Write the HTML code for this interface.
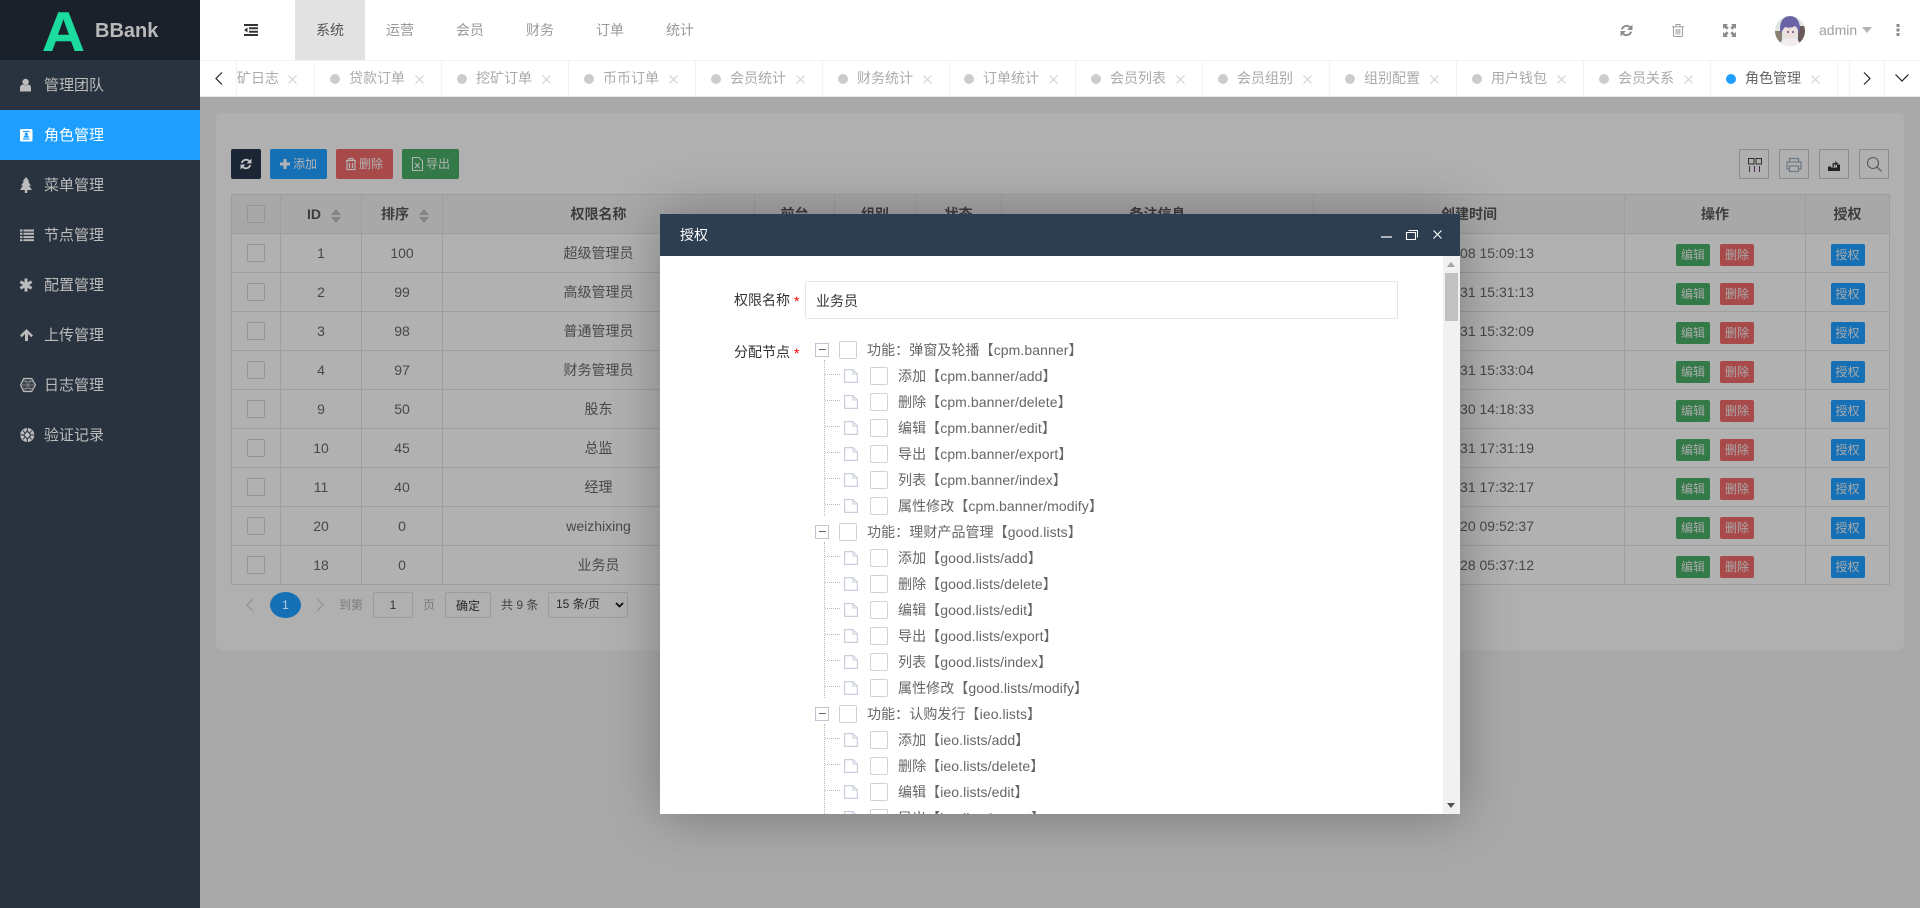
<!DOCTYPE html>
<html lang="zh"><head><meta charset="utf-8"><title>角色管理</title>
<style>
*{box-sizing:border-box}
html,body{margin:0;padding:0;width:1920px;height:908px;overflow:hidden;background:#a9a9a9;font-family:"Liberation Sans","Noto Sans CJK SC",sans-serif;font-size:14px;color:#666}
.a{position:absolute}
svg{display:block;overflow:visible}
#side{left:0;top:0;width:200px;height:908px;background:#29333f}
#brand{left:0;top:0;width:200px;height:60px;background:#1a212b;overflow:hidden}
.m{position:absolute;left:0;width:200px;height:50px;line-height:52px;padding-left:44px;font-size:15px;color:#bcbcbc}
.m.on{background:#1e9fff;color:#fff}
.m svg{position:absolute;left:20px;top:17px;width:16px;height:16px}
#top{left:200px;top:0;width:1720px;height:60px;background:#fff}
.n{position:absolute;top:0;height:60px;line-height:60px;width:70px;text-align:center;color:#999;font-size:14px}
#tabs{left:200px;top:60px;width:1720px;height:37px;background:#fff;border-top:1px solid #f2f2f2;border-bottom:1px solid #e6e6e6;overflow:hidden}
#strip{left:36px;top:0;width:1613px;height:36px;overflow:hidden;border-left:1px solid #f2f2f2}
.t{position:absolute;top:0;width:127px;height:36px;border-right:1px solid #f2f2f2;line-height:35px;color:#aaa;font-size:14px;padding-left:34px;white-space:nowrap}
.t b{position:absolute;left:15px;top:13px;width:10px;height:10px;border-radius:50%;background:#ccc}
.t svg{position:absolute;left:100px;top:14px;width:9px;height:9px}
.t.on{color:#666}.t.on b{background:#1e9fff}
#card{left:216px;top:113px;width:1688px;height:537px;background:#b0b0b0;border-radius:6px}
.b{position:absolute;top:149px;height:30px;border-radius:2px;color:#b4b4b4;font-size:12px;line-height:30px}
.ti{position:absolute;top:149px;width:30px;height:30px;border:1px solid #8d8d8d}
table{position:absolute;left:231px;top:194px;width:1658px;border-collapse:collapse;table-layout:fixed;font-size:14px;color:#484848}
td,th{border:1px solid #9e9e9e;text-align:center;padding:0;height:39px;font-weight:normal}
th{background:#a8a8a8;font-weight:bold;color:#3d3d3d;position:relative}
td{background:#b1b1b1}
.cb{display:block;margin:0 auto;width:18px;height:18px;border:1px solid #959595;border-radius:2px}
.up,.dn{position:absolute;width:0;height:0;border-left:5px solid transparent;border-right:5px solid transparent}
.up{border-bottom:6px solid #838383}.dn{border-top:6px solid #838383}
.x{display:inline-block;width:34px;height:22px;line-height:22px;border-radius:2px;font-size:12px;color:#aaa;position:relative;top:2px}
.gr{background:#337a48}.re{background:#a84a4a;margin-left:10px}.bl{background:#1670b5}
.p{position:absolute;font-size:12px;line-height:26px;top:592px;color:#7b7b7b}
#lay{left:660px;top:214px;width:800px;height:600px;box-shadow:1px 1px 50px rgba(0,0,0,.3);background:#fff}
#ttl{left:0;top:0;width:800px;height:42px;background:#2c3e50;color:#fff;line-height:42px;padding-left:20px;font-size:14px}
#body{left:0;top:42px;width:783px;height:558px;background:#fff;overflow:hidden}
#sb{left:783px;top:42px;width:17px;height:558px;background:#f1f1f1}
.l{position:absolute;left:74px;width:60px;color:#333;font-size:14px;line-height:20px;white-space:nowrap}
.l i{position:absolute;left:60px;top:1px;color:#f00;font-style:normal}
#ipt{left:145px;top:25px;width:593px;height:38px;border:1px solid #e6e6e6;border-radius:2px;line-height:38px;padding-left:10px;color:#333}
#tree{left:0;top:81px;width:783px}
.r{position:relative;height:26px;line-height:26px;white-space:nowrap;color:#666;font-size:14px}
.r span{letter-spacing:.08px}
.r u{position:absolute;width:18px;height:18px;border:1px solid #d2d2d2;border-radius:2px;top:4px;background:#fff}
.g u{left:179px}.g span{position:absolute;left:207px;top:0}
.g s{position:absolute;left:155px;top:6px;width:14px;height:14px;border:1px solid #bcc5d0;background:#fff}
.g s:after{content:"";position:absolute;left:3px;top:5px;width:7px;height:1px;background:#666}
.c u{left:210px}.c span{position:absolute;left:238px;top:0}
.c svg{position:absolute;left:184px;top:6px;width:14px;height:14px}
.c:before{content:"";position:absolute;left:165px;top:11px;width:15px;border-top:1px dotted #bbb}
.k{position:relative}
.k:before{content:"";position:absolute;left:164px;top:-3px;bottom:3px;border-left:1px dotted #bbb}
</style></head><body>
<svg width="0" height="0" style="position:absolute"><defs>
<symbol id="xx" viewBox="0 0 9 9"><path d="M.5.5l8 8M8.5.5l-8 8" stroke="#cfcfcf" stroke-width="1" fill="none"/></symbol>
<symbol id="f" viewBox="0 0 14 14"><path d="M.6.6H9L13.400 5V13.400H.6Z" fill="#fff" stroke="#c9cedb" stroke-width="1.200"/><path d="M9 .6V5H13.400" fill="none" stroke="#c9cedb" stroke-width="1.100"/></symbol>
<symbol id="rf" viewBox="0 0 24 24"><g fill="none" stroke="currentColor" stroke-width="3.6"><path d="M3.5 10A9 9 0 0 1 18.5 6"/><path d="M20.5 14A9 9 0 0 1 5.500 18"/></g><path d="M23 1V11H13ZM1 23V13H11Z" fill="currentColor"/></symbol>
</defs></svg>

<div class="a" id="side">
<div class="a" id="brand">
<div class="a" style="left:42px;top:0;width:40px;font:bold 56px/64px 'Liberation Sans',sans-serif;color:#1bdc9e;transform:scaleX(1.06);transform-origin:left top;-webkit-text-stroke:.4px #1bdc9e">A</div>
<div class="a" style="left:95px;top:19px;font:bold 20px/24px 'Liberation Sans',sans-serif;color:#b9b9b9">BBank</div>
</div>
<div class="m" style="top:60px"><svg viewBox="0 0 16 16"><circle cx="5.600" cy="5" r="3.200" fill="#bcbcbc"/><path d="M0 14.500V11C0 9 1.200 7.800 2.800 7.500 4.200 8.700 7 8.700 8.400 7.500 10 7.800 11 9 11 11V14.500Z" fill="#bcbcbc"/></svg>管理团队</div>
<div class="m on" style="top:110px"><svg viewBox="0 0 16 16"><rect x="0" y="2" width="12.500" height="12.500" rx="1.500" fill="#fff"/><path d="M3 4.500h6.500M3 12h6.500" stroke="#1e9fff" stroke-width="1.300"/><circle cx="6.300" cy="7.300" r="1.600" fill="#1e9fff"/><rect x="3.800" y="8.800" width="5" height="1.800" fill="#1e9fff"/></svg>角色管理</div>
<div class="m" style="top:160px"><svg viewBox="0 0 16 16"><path d="M6 0L9.500 4.500H8L11 8.500H9L12 13H7.300V16H4.800V13H0L3 8.500H1L4 4.500H2.500Z" fill="#bcbcbc"/></svg>菜单管理</div>
<div class="m" style="top:210px"><svg viewBox="0 0 16 16"><path d="M0 2.500h2.500v2H0zM3.500 2.500H14v2H3.500zM0 5.800h2.500v2H0zM3.500 5.800H14v2H3.500zM0 9.100h2.500v2H0zM3.500 9.100H14v2H3.500zM0 12.300h2.500v1.800H0zM3.500 12.300H14v1.800H3.500z" fill="#bcbcbc"/></svg>节点管理</div>
<div class="m" style="top:260px"><svg viewBox="0 0 16 16"><path d="M6 1.500v13M.4 4.700l11.200 6.600M11.600 4.700L.4 11.300" stroke="#bcbcbc" stroke-width="3" fill="none"/></svg>配置管理</div>
<div class="m" style="top:310px"><svg viewBox="0 0 16 16"><path d="M6.500 2L13 8.500 11.300 10.200 8 7V14H5V7L1.700 10.200 0 8.500Z" fill="#bcbcbc"/></svg>上传管理</div>
<div class="m" style="top:360px"><svg viewBox="0 0 16 16"><path d="M3.700 1.500H11.700L15.500 8 11.700 14.500H3.700L0.500 8Z" fill="#3a434e" stroke="#bcbcbc" stroke-width="1.200"/><path d="M4 1.500L8 8 4 14.500M11.500 1.500L8 8 11.500 14.500M.5 8H15.500M2.500 4.500H13.500M2.500 11.500H13.500" fill="none" stroke="#8c8c8c" stroke-width=".7"/></svg>日志管理</div>
<div class="m" style="top:410px"><svg viewBox="0 0 16 16"><circle cx="7.300" cy="8" r="7" fill="#bcbcbc"/><path d="M7.300 4L11 8 7.300 12 3.600 8Z" fill="#bcbcbc" stroke="#29333f"/><path d="M7.300 1V4M7.300 12V15M.3 8H3.600M11 8H14.300M3 3.500L5 6M11.600 3.500L9.600 6M3 12.500L5 10M11.600 12.500L9.600 10" stroke="#29333f" stroke-width="1"/></svg>验证记录</div>
</div>

<div class="a" id="top">
<svg class="a" style="left:44px;top:24px;width:14px;height:12px" viewBox="0 0 14 12"><path d="M0 0h14v2H0zM5 3.300h9v2H5zM5 6.700h9v2H5zM0 10h14v2H0zM3.500 3.500v5L0 6z" fill="#333"/></svg>
<div class="n" style="left:95px;background:#e2e2e2;color:#555">系统</div>
<div class="n" style="left:165px">运营</div>
<div class="n" style="left:235px">会员</div>
<div class="n" style="left:305px">财务</div>
<div class="n" style="left:375px">订单</div>
<div class="n" style="left:445px">统计</div>
<svg class="a" style="left:1420px;top:24px;width:13px;height:13px;color:#8c8c8c"><use href="#rf"/></svg>
<svg class="a" style="left:1472px;top:24px;width:12px;height:13px" viewBox="0 0 12 13"><path d="M1.500 3V11.500Q1.500 12.500 2.500 12.500H9.500Q10.500 12.500 10.500 11.500V3M0 2.700H12M4 2.500V.5H8V2.500M4.200 5V10.500M6 5V10.500M7.800 5V10.500" fill="none" stroke="#a0a0a0"/></svg>
<svg class="a" style="left:1523px;top:24px;width:13px;height:13px" viewBox="0 0 13 13"><path d="M0 0H5L3.500 1.500 5.700 3.700 3.700 5.700 1.500 3.500 0 5ZM13 0V5L11.500 3.500 9.300 5.700 7.300 3.700 9.500 1.500 8 0ZM0 13V8L1.500 9.500 3.700 7.300 5.700 9.300 3.500 11.500 5 13ZM13 13H8L9.500 11.500 7.300 9.300 9.300 7.300 11.500 9.500 13 8Z" fill="#8c8c8c"/></svg>
<svg class="a" style="left:1575px;top:16px;width:30px;height:30px" viewBox="0 0 30 30"><defs><clipPath id="av"><circle cx="15" cy="15" r="15"/></clipPath></defs><g clip-path="url(#av)"><rect width="30" height="30" fill="#dfe6e0"/><rect x="0" y="15" width="7" height="15" fill="#8b8074"/><rect x="23" y="10" width="7" height="20" fill="#6a5a5c"/><path d="M5 30c0-6 4-8 10-8s10 2 10 8z" fill="#f0ecf0"/><ellipse cx="15" cy="15" rx="7" ry="8" fill="#efdcdc"/><path d="M6 18C3 7 8 0 15 0s12 7 9 18c-1-3-1-6-4-8-3 2-7 2-10 1-2 2-3 4-4 7z" fill="#6a64a6"/><circle cx="18" cy="16" r="1" fill="#544a80"/><circle cx="13" cy="16" r="1" fill="#544a80"/></g></svg>
<div class="a" style="left:1619px;top:0;line-height:60px;color:#a0a0a0;font-size:14px">admin</div>
<div class="a" style="left:1662px;top:27px;width:0;height:0;border-left:5.500px solid transparent;border-right:5.500px solid transparent;border-top:6px solid #b4b4b4"></div>
<svg class="a" style="left:1696px;top:24px;width:4px;height:12px" viewBox="0 0 4 12"><path d="M.5 0h3v3h-3zM.5 4.500h3v3h-3zM.5 9h3v3h-3z" fill="#888"/></svg>
</div>

<div class="a" id="tabs">
<svg class="a" style="left:15px;top:11px;width:8px;height:13px" viewBox="0 0 8 13"><path d="M7 .5L1 6.500 7 12.500" fill="none" stroke="#222" stroke-width="1.200"/></svg>
<div class="a" id="strip">
<div class="t" style="left:-49px;padding-left:35px"><b></b>挖矿日志<svg><use href="#xx"/></svg></div>
<div class="t" style="left:78px"><b></b>贷款订单<svg><use href="#xx"/></svg></div>
<div class="t" style="left:205px"><b></b>挖矿订单<svg><use href="#xx"/></svg></div>
<div class="t" style="left:332px"><b></b>币币订单<svg><use href="#xx"/></svg></div>
<div class="t" style="left:459px"><b></b>会员统计<svg><use href="#xx"/></svg></div>
<div class="t" style="left:586px"><b></b>财务统计<svg><use href="#xx"/></svg></div>
<div class="t" style="left:712px"><b></b>订单统计<svg><use href="#xx"/></svg></div>
<div class="t" style="left:839px"><b></b>会员列表<svg><use href="#xx"/></svg></div>
<div class="t" style="left:966px"><b></b>会员组别<svg><use href="#xx"/></svg></div>
<div class="t" style="left:1093px"><b></b>组别配置<svg><use href="#xx"/></svg></div>
<div class="t" style="left:1220px"><b></b>用户钱包<svg><use href="#xx"/></svg></div>
<div class="t" style="left:1347px"><b></b>会员关系<svg><use href="#xx"/></svg></div>
<div class="t on" style="left:1474px"><b></b>角色管理<svg><use href="#xx"/></svg></div>
</div>
<div class="a" style="left:1649px;top:0;width:36px;height:36px;border-left:1px solid #f2f2f2;border-right:1px solid #f2f2f2"></div>
<svg class="a" style="left:1663px;top:11px;width:8px;height:13px" viewBox="0 0 8 13"><path d="M1 .5L7 6.500 1 12.500" fill="none" stroke="#222" stroke-width="1.200"/></svg>
<svg class="a" style="left:1695px;top:13px;width:14px;height:8px" viewBox="0 0 14 8"><path d="M.5.5L7 7 13.500.5" fill="none" stroke="#222" stroke-width="1.200"/></svg>
</div>

<div class="a" id="card"></div>
<div class="b" style="left:231px;width:30px;background:#1b2635;color:#c4c4c4"><svg class="a" style="left:9px;top:9px;width:12px;height:12px"><use href="#rf"/></svg></div>
<div class="b" style="left:270px;width:57px;background:#1670b5;padding-left:23px"><svg class="a" style="left:10px;top:10px;width:10px;height:10px" viewBox="0 0 10 10"><path d="M3.500 0h3v3.500H10v3H6.500V10h-3V6.500H0v-3h3.500z" fill="#b4b4b4"/></svg>添加</div>
<div class="b" style="left:336px;width:57px;background:#a84a4a;padding-left:23px"><svg class="a" style="left:10px;top:9px;width:10px;height:12px" viewBox="0 0 10 12"><path d="M1 3V11.500H9V3M0 2.500H10M3 2V.5H7V2M3.500 5V10M6.500 5V10" fill="none" stroke="#b4b4b4" stroke-width="1.200"/></svg>删除</div>
<div class="b" style="left:402px;width:57px;background:#337a48;padding-left:24px"><svg class="a" style="left:10px;top:8px;width:11px;height:14px" viewBox="0 0 11 14"><path d="M.5.5H7L10.500 4V13.500H.5Z" fill="none" stroke="#b4b4b4"/><path d="M3 6L7.500 11M7.500 6L3 11" stroke="#b4b4b4" stroke-width="1.100"/></svg>导出</div>

<div class="ti" style="left:1739px"><svg width="28" height="28" viewBox="1 1 28 28"><path d="M9.500 9.500h5.500v5.500H9.500zM17 9.500h5.500v5.500H17z" fill="none" stroke="#2c2c2c"/><path d="M10.500 17v6M15.500 17v6M20.500 17v6" stroke="#4a2a52"/></svg></div>
<div class="ti" style="left:1779px"><svg width="28" height="28" viewBox="1 1 28 28"><path d="M10.500 13V9.500H19.500V13M10.500 20H8V13H22V20H19.500M10.500 17H19.500V22.500H10.500Z" fill="none" stroke="#6f7a84" stroke-width="1.300"/></svg></div>
<div class="ti" style="left:1819px"><svg width="28" height="28" viewBox="1 1 28 28"><path d="M9 17.500H12V18.500H18V15.500H21V22H9Z" fill="#222"/><path d="M13.500 18V14H16V12L19.500 14.500 16 17V15.500H15V18Z" fill="#3a3a3a"/></svg></div>
<div class="ti" style="left:1859px"><svg width="28" height="28" viewBox="1 1 28 28"><circle cx="14" cy="14" r="5.500" fill="none" stroke="#585858" stroke-width="1.100"/><path d="M18 18L22.500 22.500" stroke="#666" stroke-width="1.500"/></svg></div>

<table><colgroup><col style="width:49px"><col style="width:81px"><col style="width:81px"><col style="width:312px"><col style="width:80px"><col style="width:81px"><col style="width:86px"><col style="width:312px"><col style="width:311px"><col style="width:181px"><col style="width:84px"></colgroup>
<tr><th><i class="cb"></i></th><th><span style="position:relative;left:-7px">ID</span><i class="up" style="top:14px;left:50px"></i><i class="dn" style="top:22px;left:50px"></i></th><th><span style="position:relative;left:-7px">排序</span><i class="up" style="top:14px;left:57px"></i><i class="dn" style="top:22px;left:57px"></i></th><th>权限名称</th><th>前台</th><th>组别</th><th>状态</th><th>备注信息</th><th>创建时间</th><th>操作</th><th>授权</th></tr>
<tr><td><i class="cb"></i></td><td>1</td><td>100</td><td>超级管理员</td><td></td><td></td><td></td><td></td><td>2021-01-08 15:09:13</td><td><a class="x gr">编辑</a><a class="x re">删除</a></td><td><a class="x bl">授权</a></td></tr>
<tr><td><i class="cb"></i></td><td>2</td><td>99</td><td>高级管理员</td><td></td><td></td><td></td><td></td><td>2021-03-31 15:31:13</td><td><a class="x gr">编辑</a><a class="x re">删除</a></td><td><a class="x bl">授权</a></td></tr>
<tr><td><i class="cb"></i></td><td>3</td><td>98</td><td>普通管理员</td><td></td><td></td><td></td><td></td><td>2021-03-31 15:32:09</td><td><a class="x gr">编辑</a><a class="x re">删除</a></td><td><a class="x bl">授权</a></td></tr>
<tr><td><i class="cb"></i></td><td>4</td><td>97</td><td>财务管理员</td><td></td><td></td><td></td><td></td><td>2021-03-31 15:33:04</td><td><a class="x gr">编辑</a><a class="x re">删除</a></td><td><a class="x bl">授权</a></td></tr>
<tr><td><i class="cb"></i></td><td>9</td><td>50</td><td>股东</td><td></td><td></td><td></td><td></td><td>2021-04-30 14:18:33</td><td><a class="x gr">编辑</a><a class="x re">删除</a></td><td><a class="x bl">授权</a></td></tr>
<tr><td><i class="cb"></i></td><td>10</td><td>45</td><td>总监</td><td></td><td></td><td></td><td></td><td>2021-03-31 17:31:19</td><td><a class="x gr">编辑</a><a class="x re">删除</a></td><td><a class="x bl">授权</a></td></tr>
<tr><td><i class="cb"></i></td><td>11</td><td>40</td><td>经理</td><td></td><td></td><td></td><td></td><td>2021-03-31 17:32:17</td><td><a class="x gr">编辑</a><a class="x re">删除</a></td><td><a class="x bl">授权</a></td></tr>
<tr><td><i class="cb"></i></td><td>20</td><td>0</td><td>weizhixing</td><td></td><td></td><td></td><td></td><td>2021-05-20 09:52:37</td><td><a class="x gr">编辑</a><a class="x re">删除</a></td><td><a class="x bl">授权</a></td></tr>
<tr><td><i class="cb"></i></td><td>18</td><td>0</td><td>业务员</td><td></td><td></td><td></td><td></td><td>2021-04-28 05:37:12</td><td><a class="x gr">编辑</a><a class="x re">删除</a></td><td><a class="x bl">授权</a></td></tr>
</table>

<svg class="a" style="left:246px;top:598px;width:8px;height:14px" viewBox="0 0 8 14"><path d="M7 1L1 7 7 13" fill="none" stroke="#929292" stroke-width="1.200"/></svg>
<div class="a" style="left:270px;top:592px;width:31px;height:26px;border-radius:50%;background:#1670b5;color:#b8cfe0;font-size:12px;line-height:26px;text-align:center">1</div>
<svg class="a" style="left:316px;top:598px;width:8px;height:14px" viewBox="0 0 8 14"><path d="M1 1L7 7 1 13" fill="none" stroke="#929292" stroke-width="1.200"/></svg>
<div class="p" style="left:339px">到第</div>
<div class="a" style="left:373px;top:592px;width:40px;height:26px;border:1px solid #9c9c9c;border-radius:2px;text-align:center;line-height:24px;font-size:12px;color:#333">1</div>
<div class="p" style="left:423px">页</div>
<div class="a" style="left:445px;top:592px;width:46px;height:26px;border:1px solid #9c9c9c;border-radius:2px;text-align:center;line-height:26px;font-size:12px;color:#2a2a2a">确定</div>
<div class="p" style="left:501px;color:#444">共 9 条</div>
<div class="a" style="left:548px;top:592px;width:80px;height:26px;border:1px solid #9c9c9c;border-radius:2px;line-height:23px;padding-left:7px;font-size:12px;color:#2a2a2a">15 条/页</div>
<svg class="a" style="left:615px;top:602px;width:9px;height:6px" viewBox="0 0 9 6"><path d="M1 1L4.500 4.500 8 1" fill="none" stroke="#111" stroke-width="1.800"/></svg>

<div class="a" id="lay">
<div class="a" id="ttl">授权
<svg class="a" style="left:721px;top:22px;width:11px;height:2px" viewBox="0 0 11 2"><path d="M0 1H11" stroke="#fff" stroke-width="1.200"/></svg>
<svg class="a" style="left:746px;top:16px;width:12px;height:10px" viewBox="0 0 12 10"><path d="M.5 2.500H9.500V9.500H.5Z" fill="none" stroke="#fff" stroke-width="1.100"/><path d="M2.500.5H11.500V7.500" fill="none" stroke="#fff" stroke-width="1"/></svg>
<svg class="a" style="left:773px;top:16px;width:9px;height:9px" viewBox="0 0 9 9"><path d="M.5.5l8 8M8.500.5l-8 8" stroke="#fff" stroke-width="1.100"/></svg>
</div>
<div class="a" id="body">
<div class="l" style="top:34px">权限名称<i>*</i></div>
<div class="a" id="ipt">业务员</div>
<div class="l" style="top:86px">分配节点<i>*</i></div>
<div class="a" id="tree">
<div class="r g"><s></s><u></u><span>功能：弹窗及轮播【cpm.banner】</span></div>
<div class="k">
<div class="r c"><svg><use href="#f"/></svg><u></u><span>添加【cpm.banner/add】</span></div>
<div class="r c"><svg><use href="#f"/></svg><u></u><span>删除【cpm.banner/delete】</span></div>
<div class="r c"><svg><use href="#f"/></svg><u></u><span>编辑【cpm.banner/edit】</span></div>
<div class="r c"><svg><use href="#f"/></svg><u></u><span>导出【cpm.banner/export】</span></div>
<div class="r c"><svg><use href="#f"/></svg><u></u><span>列表【cpm.banner/index】</span></div>
<div class="r c"><svg><use href="#f"/></svg><u></u><span>属性修改【cpm.banner/modify】</span></div>
</div>
<div class="r g"><s></s><u></u><span>功能：理财产品管理【good.lists】</span></div>
<div class="k">
<div class="r c"><svg><use href="#f"/></svg><u></u><span>添加【good.lists/add】</span></div>
<div class="r c"><svg><use href="#f"/></svg><u></u><span>删除【good.lists/delete】</span></div>
<div class="r c"><svg><use href="#f"/></svg><u></u><span>编辑【good.lists/edit】</span></div>
<div class="r c"><svg><use href="#f"/></svg><u></u><span>导出【good.lists/export】</span></div>
<div class="r c"><svg><use href="#f"/></svg><u></u><span>列表【good.lists/index】</span></div>
<div class="r c"><svg><use href="#f"/></svg><u></u><span>属性修改【good.lists/modify】</span></div>
</div>
<div class="r g"><s></s><u></u><span>功能：认购发行【ieo.lists】</span></div>
<div class="k">
<div class="r c"><svg><use href="#f"/></svg><u></u><span>添加【ieo.lists/add】</span></div>
<div class="r c"><svg><use href="#f"/></svg><u></u><span>删除【ieo.lists/delete】</span></div>
<div class="r c"><svg><use href="#f"/></svg><u></u><span>编辑【ieo.lists/edit】</span></div>
<div class="r c"><svg><use href="#f"/></svg><u></u><span>导出【ieo.lists/export】</span></div>
<div class="r c"><svg><use href="#f"/></svg><u></u><span>列表【ieo.lists/index】</span></div>
</div>
</div>
</div>
<div class="a" id="sb">
<div class="a" style="left:4px;top:6px;width:0;height:0;border-left:4px solid transparent;border-right:4px solid transparent;border-bottom:5px solid #a3a3a3"></div>
<div class="a" style="left:2px;top:17px;width:13px;height:48px;background:#c1c1c1"></div>
<div class="a" style="left:4px;bottom:6px;width:0;height:0;border-left:4px solid transparent;border-right:4px solid transparent;border-top:5px solid #505050"></div>
</div>
</div>
</body></html>
